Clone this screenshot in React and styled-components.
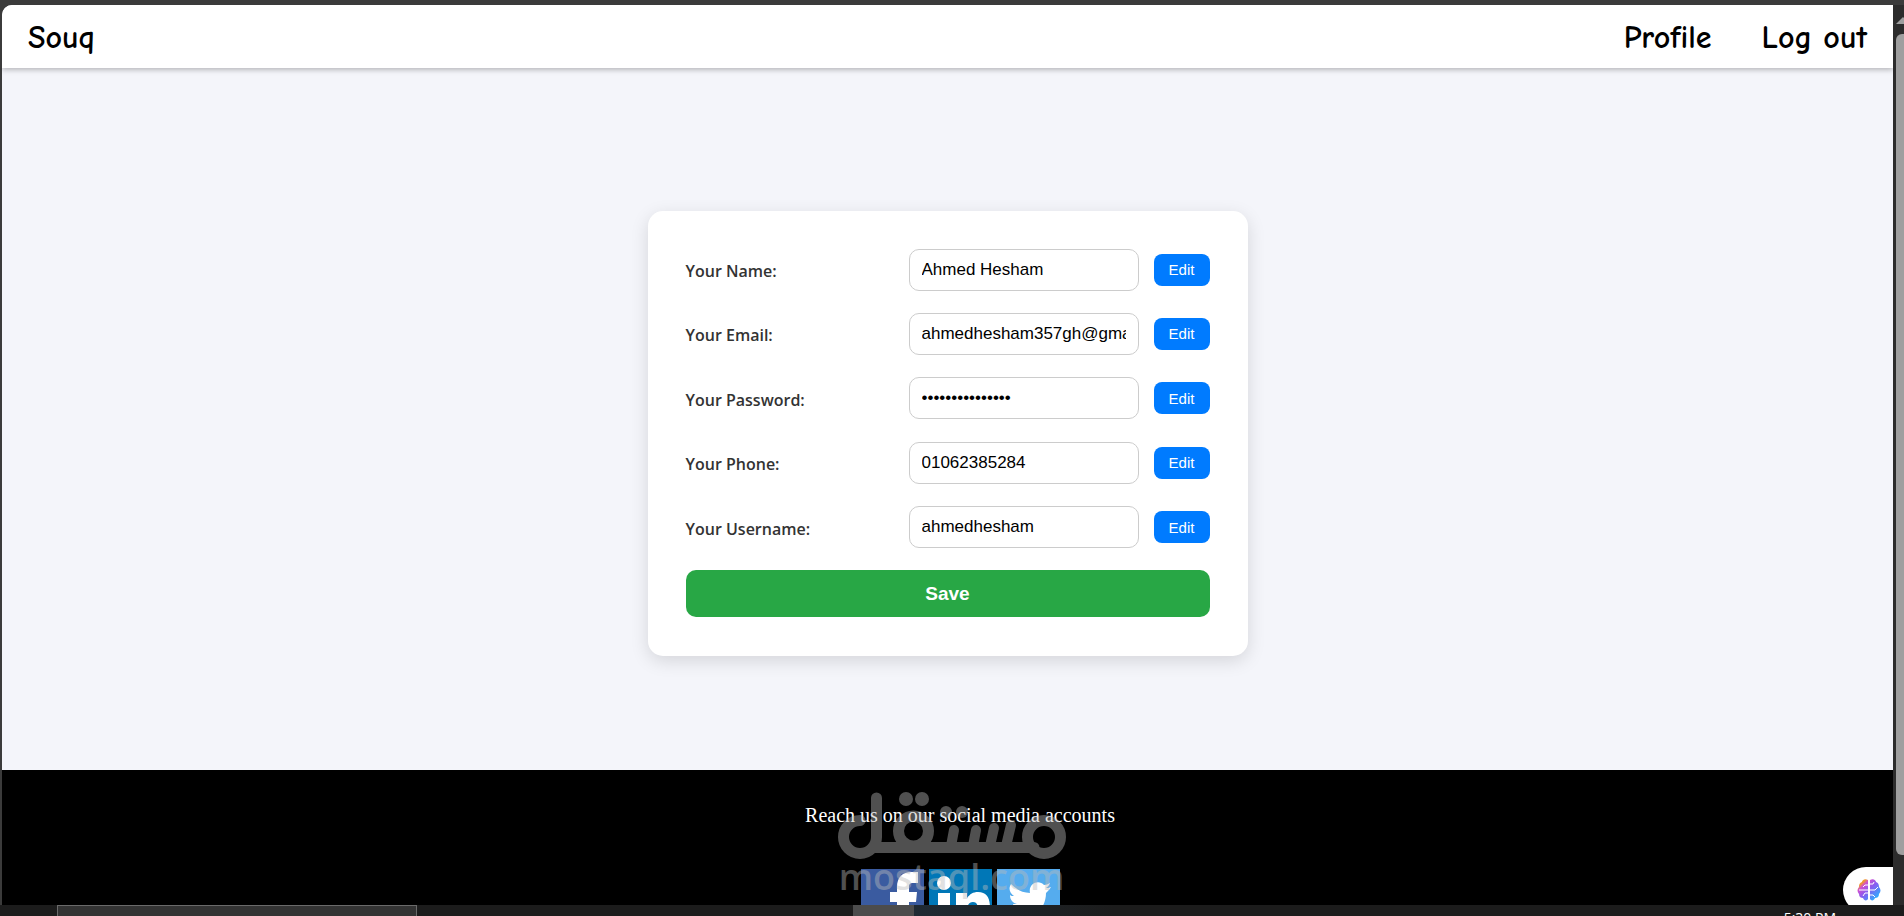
import React from "react";
import styled, { createGlobalStyle } from "styled-components";

const Global = createGlobalStyle`
  *, *::before, *::after { box-sizing: border-box; }
  body { margin: 0; background: #3b3b3b; }
`;

const Window = styled.div`
  position: relative;
  display: flex;
  flex-direction: column;
  height: 100vh;
  overflow: hidden;
  background: #3b3b3b;
`;

const Viewport = styled.div`
  flex: 1;
  min-height: 0;
  display: flex;
  padding: 5px 0 0 2px;
`;

const Page = styled.div`
  position: relative;
  flex: 1;
  min-width: 0;
  display: flex;
  flex-direction: column;
  overflow: hidden;
  border-top-left-radius: 10px;
  background: #f4f5fa;
`;

const Header = styled.header`
  position: relative;
  flex: none;
  display: flex;
  align-items: center;
  justify-content: space-between;
  height: 63px;
  padding: 2px 26px 0;
  background: #fff;
  box-shadow: 0 2px 5px rgba(0, 0, 0, 0.25);
`;

const Nav = styled.nav`
  display: flex;
  gap: 50px;
`;

const NavLink = styled.a`
  color: #000;
  font-family: "Comic Sans MS", "Comic Neue", "Noto Sans", sans-serif;
  font-size: 32px;
  font-weight: 700;
  line-height: 44px;
  text-decoration: none;
`;

const Main = styled.main`
  flex: 1;
  min-height: 0;
  display: flex;
  align-items: center;
  justify-content: center;
  padding-top: 28px;
`;

const Card = styled.section`
  width: 600px;
  padding: 38px;
  border-radius: 15px;
  background: #fff;
  box-shadow: 0 5px 18px rgba(0, 0, 0, 0.13);
`;

const Form = styled.form`
  display: flex;
  flex-direction: column;
  justify-content: space-between;
  min-height: 369px;
`;

const Row = styled.div`
  display: flex;
  align-items: center;
  gap: 15px;
`;

const Label = styled.label`
  flex: 1;
  padding-top: 3px;
  color: #333;
  font-family: "Segoe UI", "Open Sans", sans-serif;
  font-size: 16px;
  font-weight: 600;
  line-height: 24px;
`;

const Input = styled.input`
  width: 230px;
  height: 42px;
  padding: 0 12px;
  border: 1px solid #ccc;
  border-radius: 10px;
  background: #fff;
  color: #000;
  font: 17px/20px "Liberation Sans", sans-serif;
`;

const Button = styled.button`
  border: 0;
  border-radius: 8px;
  color: #fff;
  font-family: "Liberation Sans", sans-serif;
  cursor: pointer;
`;

const EditButton = styled(Button)`
  width: 56px;
  height: 32px;
  padding: 0;
  background: #007bff;
  font-size: 15px;
`;

const SaveButton = styled(Button)`
  height: 47px;
  border-radius: 10px;
  background: #28a745;
  font-size: 19px;
  font-weight: 700;
`;

const Footer = styled.footer`
  position: relative;
  flex: none;
  display: flex;
  flex-direction: column;
  align-items: center;
  gap: 42px;
  height: 135px;
  padding: 34px 0 0 25px;
  background: #000;
`;

const FooterText = styled.p`
  margin: 0;
  color: #fff;
  font: 20px/23px "Liberation Serif", serif;
`;

const Socials = styled.div`
  display: flex;
  gap: 5px;
`;

const SocialLink = styled.a`
  display: block;
  width: 63px;
  height: 63px;
  background: ${(p) => p.$bg};
  svg { display: block; width: 100%; height: 100%; }
`;

const Watermark = styled.div`
  position: absolute;
  left: calc(50% - 110px);
  top: 22px;
  width: 228px;
  opacity: 0.43;
  color: #bababa;
  pointer-events: none;
  svg { display: block; width: 100%; }
`;

const WatermarkText = styled.div`
  text-align: center;
  font: 600 36px/36px "Open Sans", sans-serif;
`;

const Assistant = styled.button`
  position: absolute;
  right: 0;
  bottom: -8px;
  width: 50px;
  height: 46px;
  padding: 0 0 0 14px;
  border: 0;
  border-radius: 23px 0 0 23px;
  background: #fff;
  svg { display: block; width: 24px; height: 24px; }
`;

const Scrollbar = styled.div`
  flex: none;
  display: flex;
  flex-direction: column;
  width: 11px;
  padding: 12px 0 50px 3px;
  gap: 10px;
  overflow: hidden;
  background: #2c2c2c;
  svg { flex: none; display: block; width: 14px; height: 7px; }
`;

const Thumb = styled.div`
  flex: 1;
  width: 14px;
  border-radius: 6px;
  background: #9f9f9f;
`;

const Taskbar = styled.div`
  flex: none;
  display: flex;
  height: 11px;
  overflow: hidden;
  background: #1c1c1c;
  padding-left: 57px;
`;

const TaskSearch = styled.div`
  width: 360px;
  border: 1px solid #6a6a6a;
  border-width: 1px 1px 0;
  background: #333;
`;

const TaskActive = styled.div`
  width: 61px;
  margin-left: 436px;
  background: #4c4c4c;
`;

const TaskGlow = styled.div`
  width: 200px;
  background: linear-gradient(90deg, #1f2a33, #1c1c1c);
`;

const Clock = styled.time`
  margin-left: auto;
  padding: 5px 68px 0 0;
  color: #fff;
  font: 14px/16px "Open Sans", sans-serif;
`;

const FIELDS = [
  { id: "name", label: "Your Name:", type: "text", value: "Ahmed Hesham" },
  { id: "email", label: "Your Email:", type: "email", value: "ahmedhesham357gh@gmail.com" },
  { id: "password", label: "Your Password:", type: "password", value: "xxxxxxxxxxxxxxx" },
  { id: "phone", label: "Your Phone:", type: "tel", value: "01062385284" },
  { id: "username", label: "Your Username:", type: "text", value: "ahmedhesham" },
];

function Logo() {
  return (
    <svg viewBox="0 0 228 67" fill="none" stroke="currentColor" strokeWidth="11" strokeLinecap="round">
      <path d="M38.500 6 V45 A16.500 16.500 0 1 1 22 28.500 M36 55.500 H196" />
      <circle cx="75.500" cy="39" r="15" />
      <circle cx="206" cy="45" r="16.500" />
      <path strokeWidth="10" d="M116 38 L113 54 M138 38 L135 54 M156 36 L152 54 M173 33 L168 54" />
      <g fill="currentColor" stroke="none">
        <circle cx="68" cy="7" r="7" />
        <circle cx="84" cy="7" r="7" />
        <circle cx="108" cy="20" r="6" />
        <circle cx="124" cy="20" r="6" />
      </g>
    </svg>
  );
}

export default function App() {
  return (
    <Window>
      <Global />
      <Viewport>
        <Page>
          <Header>
            <NavLink href="#home">Souq</NavLink>
            <Nav>
              <NavLink href="#profile">Profile</NavLink>
              <NavLink href="#logout">Log out</NavLink>
            </Nav>
          </Header>
          <Main>
            <Card>
              <Form onSubmit={(e) => e.preventDefault()}>
                {FIELDS.map((f) => (
                  <Row key={f.id}>
                    <Label htmlFor={f.id}>{f.label}</Label>
                    <Input id={f.id} type={f.type} defaultValue={f.value} />
                    <EditButton type="button">Edit</EditButton>
                  </Row>
                ))}
                <SaveButton type="submit">Save</SaveButton>
              </Form>
            </Card>
          </Main>
          <Footer>
            <FooterText>Reach us on our social media accounts</FooterText>
            <Socials>
              <SocialLink href="#facebook" aria-label="Facebook" $bg="#3a5ba0">
                <svg viewBox="0 0 63 63" fill="#fff">
                  <path d="M36 63V33h-7V23h7v-5C36 8 42 3 50 3h7v11h-5c-3 0-4 1-4 4v5h8l-1 10h-7v30z" />
                </svg>
              </SocialLink>
              <SocialLink href="#linkedin" aria-label="LinkedIn" $bg="#0077b7">
                <svg viewBox="0 0 63 63" fill="#fff">
                  <circle cx="15" cy="14" r="7" />
                  <path d="M9 24h12v36H9zM27 24h11v5c3-4 6-6 11-6 9 0 12 6 12 16v21H49V42c0-6-1-9-5-9s-6 3-6 9v18H27z" />
                </svg>
              </SocialLink>
              <SocialLink href="#twitter" aria-label="Twitter" $bg="#55acee">
                <svg viewBox="0 0 63 63" fill="#fff">
                  <path d="M54 18c-2 1-3 1-5 1 2-1 3-3 4-5-2 1-4 2-6 2-5-6-16-2-14 8-8 0-14-4-19-9-3 5-1 9 3 12-2 0-3 0-4-1 0 5 3 8 7 9h-4c1 4 4 6 9 6-4 4-9 5-14 4 20 11 38-2 38-21 2-2 4-4 5-6z" />
                </svg>
              </SocialLink>
            </Socials>
            <Watermark aria-hidden="true">
              <Logo />
              <WatermarkText>mostaql.com</WatermarkText>
            </Watermark>
            <Assistant type="button" aria-label="Assistant">
              <svg viewBox="0 0 24 24">
                <defs>
                  <linearGradient id="brain" x1="0" y1="0" x2="1" y2="1">
                    <stop offset="0.18" stopColor="#f09a2c" />
                    <stop offset="0.28" stopColor="#cf4fd0" />
                    <stop offset="0.5" stopColor="#8a5cf0" />
                    <stop offset="0.9" stopColor="#24b4ff" />
                  </linearGradient>
                </defs>
                <path fill="url(#brain)" d="M11 2C8 0 5 2 5 4 2 5 2 8 2 9c-2 2-2 5 0 7 0 3 2 4 4 4 1 3 4 3 5 1zM13 2c3-2 6 0 6 2 3 1 3 4 3 5 2 2 2 5 0 7 0 3-2 4-4 4-1 3-4 3-5 1z" />
                <path fill="none" stroke="#fff" d="M11 7H8L6 9M2 12h9M6 18l2-3h3M13 6h3l1-2M13 12h5l3-3M13 17h3l2 2" />
              </svg>
            </Assistant>
          </Footer>
        </Page>
        <Scrollbar aria-hidden="true">
          <svg viewBox="0 0 14 7"><path fill="#9f9f9f" d="M7 0l7 7H0z" /></svg>
          <Thumb />
        </Scrollbar>
      </Viewport>
      <Taskbar>
        <TaskSearch />
        <TaskActive />
        <TaskGlow />
        <Clock>5:30 PM</Clock>
      </Taskbar>
    </Window>
  );
}
